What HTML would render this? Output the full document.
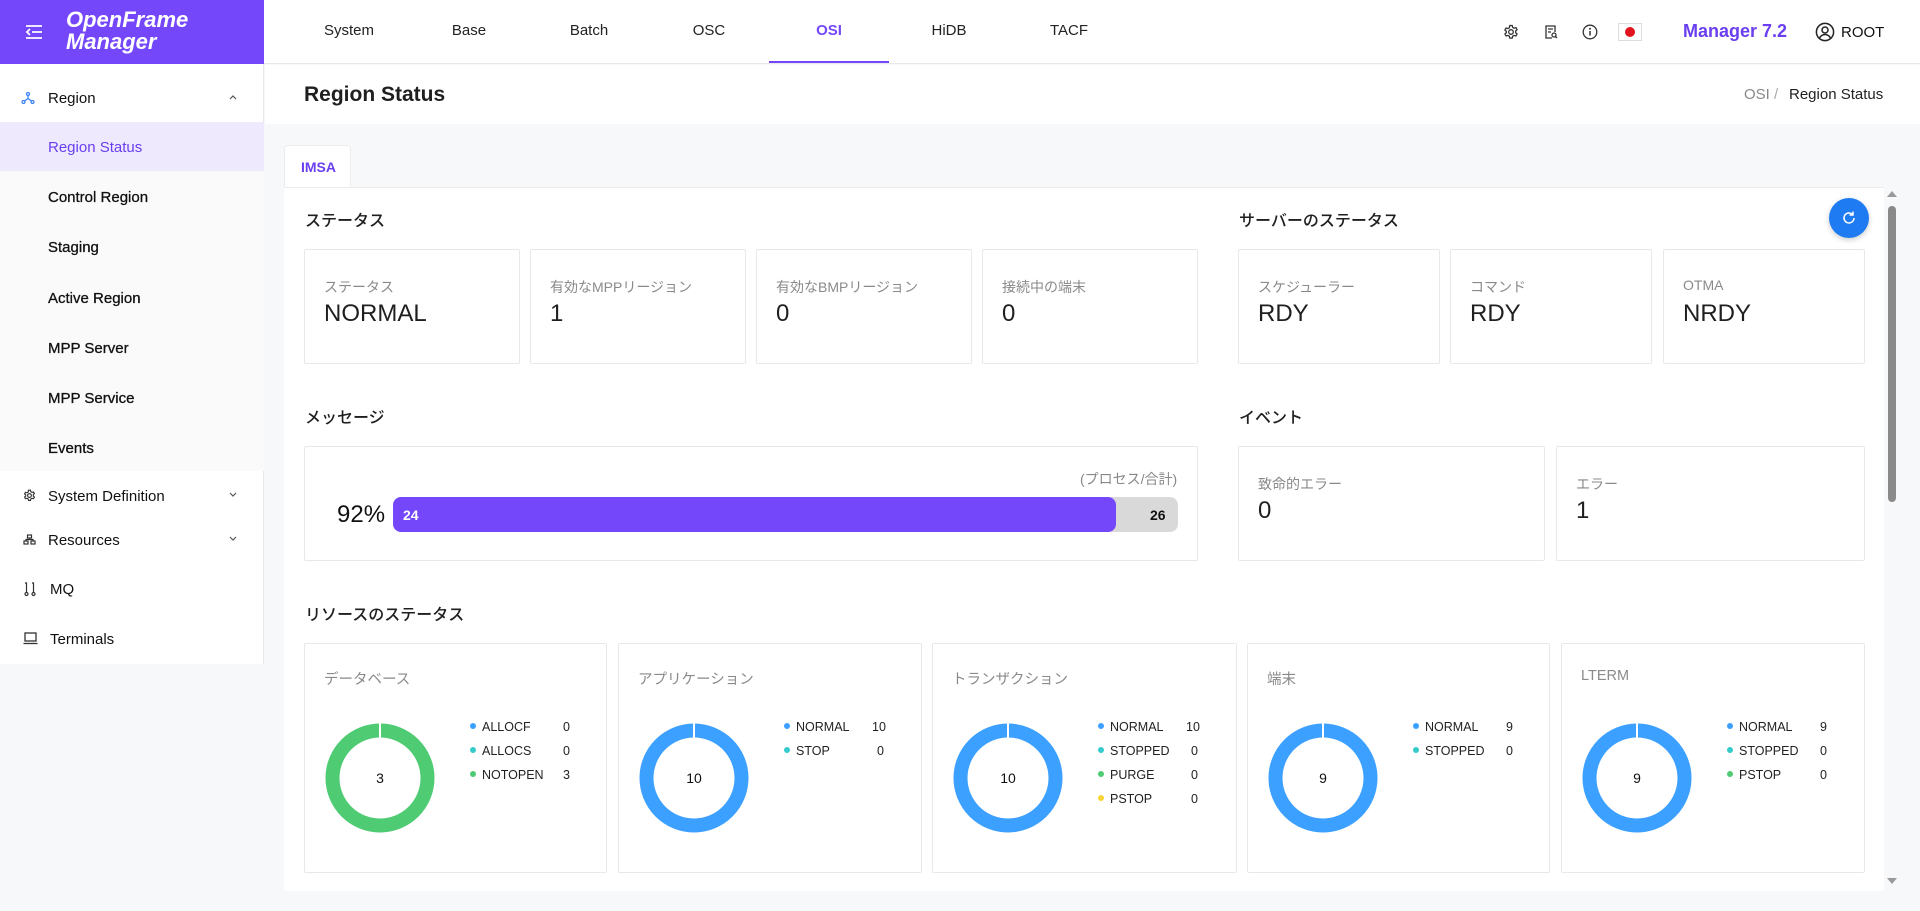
<!DOCTYPE html>
<html><head><meta charset="utf-8"><style>
*{box-sizing:border-box;margin:0;padding:0}
body{width:1920px;height:911px;overflow:hidden;background:#f7f8fa;font-family:"Liberation Sans","Noto Sans CJK JP",sans-serif;color:#1f1f1f;position:relative}
.a{position:absolute}
.t{position:absolute;white-space:nowrap;line-height:1}
.card{position:absolute;background:#fff;border:1px solid #e8e8e8;border-radius:2px}
.lbl{position:absolute;left:19px;top:27px;font-size:14px;color:#8a8a8a;white-space:nowrap}
.val{position:absolute;left:19px;top:50px;font-size:24px;color:#1f1f1f;white-space:nowrap}
.sec{position:absolute;font-size:16px;font-weight:500;color:#1f1f1f;white-space:nowrap}
.nav{position:absolute;top:22px;font-size:15px;color:#222;transform:translateX(-50%)}
.side{position:absolute;left:48px;font-size:15px;color:#111;white-space:nowrap;-webkit-text-stroke:0.3px #111}
.leg{position:absolute;font-size:12.5px;color:#222;white-space:nowrap}
.dot{position:absolute;width:6px;height:6px;border-radius:50%}
</style></head><body>
<!-- header -->
<div class="a" style="left:0;top:0;width:1920px;height:64px;background:#fff;border-bottom:1px solid #e8e8e8"></div>
<div class="a" style="left:0;top:0;width:264px;height:64px;background:#7447fb"></div>
<svg class="a" style="left:25px;top:24px" width="18" height="16" viewBox="0 0 18 16"><g stroke="#fff" stroke-width="1.8" fill="none"><path d="M1 2h16M7 8h10M1 14h16M5 5l-3 3 3 3"/></g></svg>
<div class="t" style="left:66px;top:9px;color:#fff;font-size:22px;font-weight:bold;font-style:italic;line-height:22px">OpenFrame<br>Manager</div>
<div class="nav" style="left:349px">System</div>
<div class="nav" style="left:469px">Base</div>
<div class="nav" style="left:589px">Batch</div>
<div class="nav" style="left:709px">OSC</div>
<div class="nav" style="left:829px;color:#7447fb;font-weight:600">OSI</div>
<div class="nav" style="left:949px">HiDB</div>
<div class="nav" style="left:1069px">TACF</div>
<div class="a" style="left:769px;top:61px;width:120px;height:2px;background:#7447fb"></div>
<svg class="a" style="left:1503px;top:24px" width="16" height="16" viewBox="0 0 16 16"><g fill="none" stroke="#333" stroke-width="1.3"><circle cx="8" cy="8" r="2.3"/><path d="M6.8 1.5h2.4l.4 1.8 1.5.9 1.8-.6 1.2 2-1.4 1.3v1.8l1.4 1.3-1.2 2-1.8-.6-1.5.9-.4 1.8H6.8l-.4-1.8-1.5-.9-1.8.6-1.2-2 1.4-1.3V7.3L1.9 6l1.2-2 1.8.6 1.5-.9z"/></g></svg>
<svg class="a" style="left:1543px;top:24px" width="16" height="16" viewBox="0 0 16 16"><g fill="none" stroke="#333" stroke-width="1.3"><path d="M9 14H3V2h9v6"/><path d="M5 5h5M5 8h3"/><circle cx="11" cy="11" r="2"/><path d="M12.5 12.5l1.5 1.5"/></g></svg>
<svg class="a" style="left:1582px;top:24px" width="16" height="16" viewBox="0 0 16 16"><circle cx="8" cy="8" r="6.8" fill="none" stroke="#333" stroke-width="1.3"/><path d="M8 7v4.5" stroke="#333" stroke-width="1.5"/><circle cx="8" cy="4.8" r="1" fill="#333"/></svg>
<div class="a" style="left:1618px;top:23px;width:24px;height:18px;background:#fff;border:1px solid #ddd"></div>
<div class="a" style="left:1625px;top:27px;width:10px;height:10px;border-radius:50%;background:#e0141e"></div>
<div class="t" style="left:1683px;top:22px;font-size:18px;font-weight:bold;color:#6a3ff0">Manager 7.2</div>
<svg class="a" style="left:1815px;top:22px" width="20" height="20" viewBox="0 0 20 20"><g fill="none" stroke="#222" stroke-width="1.5"><circle cx="10" cy="10" r="8.6"/><circle cx="10" cy="8" r="3"/><path d="M4.5 16c1.5-2.5 3.5-3.5 5.5-3.5s4 1 5.5 3.5"/></g></svg>
<div class="t" style="left:1841px;top:25px;font-size:15px;color:#111">ROOT</div>
<!-- sidebar -->
<div class="a" style="left:0;top:64px;width:264px;height:600px;background:#fff;border-right:1px solid #e8e8e8"></div>
<div class="a" style="left:0;top:171px;width:264px;height:300px;background:#fafafa"></div>
<div class="a" style="left:0;top:122px;width:264px;height:49px;background:#efe9fd"></div>
<svg class="a" style="left:21px;top:91px" width="14" height="14" viewBox="0 0 14 14"><g fill="none" stroke="#3b82f6" stroke-width="1.3"><circle cx="7" cy="3" r="1.5"/><circle cx="2.5" cy="11" r="1.5"/><circle cx="11.5" cy="11" r="1.5"/><path d="M7 4.5v3L3.5 10M7 7.5l3.5 2.5"/></g></svg>
<div class="side" style="top:90px;-webkit-text-stroke:0">Region</div>
<svg class="a" style="left:228px;top:93px" width="10" height="8" viewBox="0 0 10 8"><path d="M2 6l3-3 3 3" fill="none" stroke="#555" stroke-width="1.2"/></svg>
<div class="side" style="top:139px;color:#6a3ff0;-webkit-text-stroke:0">Region Status</div>
<div class="side" style="top:189px">Control Region</div>
<div class="side" style="top:239px">Staging</div>
<div class="side" style="top:290px">Active Region</div>
<div class="side" style="top:340px">MPP Server</div>
<div class="side" style="top:390px">MPP Service</div>
<div class="side" style="top:440px">Events</div>
<svg class="a" style="left:23px;top:489px" width="13" height="13" viewBox="0 0 16 16"><g fill="none" stroke="#333" stroke-width="1.4"><circle cx="8" cy="8" r="2.3"/><path d="M6.8 1.5h2.4l.4 1.8 1.5.9 1.8-.6 1.2 2-1.4 1.3v1.8l1.4 1.3-1.2 2-1.8-.6-1.5.9-.4 1.8H6.8l-.4-1.8-1.5-.9-1.8.6-1.2-2 1.4-1.3V7.3L1.9 6l1.2-2 1.8.6 1.5-.9z"/></g></svg>
<div class="side" style="top:488px;-webkit-text-stroke:0">System Definition</div>
<svg class="a" style="left:228px;top:491px" width="10" height="8" viewBox="0 0 10 8"><path d="M2 2l3 3 3-3" fill="none" stroke="#555" stroke-width="1.2"/></svg>
<svg class="a" style="left:23px;top:534px" width="13" height="11" viewBox="0 0 13 11"><g fill="none" stroke="#333" stroke-width="1.2"><rect x="4.5" y="1" width="4" height="3"/><rect x="1" y="7" width="4" height="3"/><rect x="8" y="7" width="4" height="3"/><path d="M6.5 4v1.5M3 7V5.5h7V7"/></g></svg>
<div class="side" style="top:532px;-webkit-text-stroke:0">Resources</div>
<svg class="a" style="left:228px;top:535px" width="10" height="8" viewBox="0 0 10 8"><path d="M2 2l3 3 3-3" fill="none" stroke="#555" stroke-width="1.2"/></svg>
<svg class="a" style="left:24px;top:581px" width="12" height="16" viewBox="0 0 12 16"><g fill="none" stroke="#333" stroke-width="1.2"><circle cx="2.5" cy="13" r="1.5"/><circle cx="9.5" cy="13" r="1.5"/><path d="M2.5 11.5V2H1M9.5 11.5V2H8"/></g></svg>
<div class="side" style="left:50px;top:581px;-webkit-text-stroke:0">MQ</div>
<svg class="a" style="left:23px;top:632px" width="15" height="13" viewBox="0 0 15 13"><g fill="none" stroke="#333" stroke-width="1.3"><rect x="2" y="1" width="11" height="8"/><path d="M0.5 11.5h14"/></g></svg>
<div class="side" style="left:50px;top:631px;-webkit-text-stroke:0">Terminals</div>
<!-- title bar -->
<div class="a" style="left:265px;top:65px;width:1655px;height:59px;background:#fff"></div>
<div class="t" style="left:304px;top:84px;font-size:21px;font-weight:bold;color:#1f1f1f">Region Status</div>
<div class="t" style="left:1744px;top:87px;font-size:15px;color:#888">OSI</div>
<div class="t" style="left:1774px;top:87px;font-size:15px;color:#aaa">/</div>
<div class="t" style="left:1789px;top:87px;font-size:15px;color:#222">Region Status</div>
<!-- tab -->
<div class="a" style="left:284px;top:145px;width:67px;height:43px;background:#fff;border:1px solid #ececec;border-bottom:none;border-radius:4px 4px 0 0"></div>
<div class="t" style="left:301px;top:160px;font-size:14px;color:#6a3ff0;font-weight:600">IMSA</div>
<div class="a" style="left:284px;top:187px;width:1600px;height:704px;background:#fff;border-top:1px solid #ececec"></div>
<!-- scrollbar -->
<div class="a" style="left:1888px;top:206px;width:8px;height:296px;background:#8a8a8a;border-radius:4px"></div>
<svg class="a" style="left:1886px;top:190px" width="12" height="8"><path d="M1 7l5-6 5 6z" fill="#999"/></svg>
<svg class="a" style="left:1886px;top:877px" width="12" height="8"><path d="M1 1l5 6 5-6z" fill="#999"/></svg>
<!-- refresh -->
<div class="a" style="left:1829px;top:198px;width:40px;height:40px;border-radius:50%;background:#1e7bf2;box-shadow:0 2px 6px rgba(0,0,0,.2)"></div>
<svg class="a" style="left:1841px;top:210px" width="16" height="16" viewBox="0 0 16 16"><path d="M13 8a5 5 0 1 1-1.6-3.7" fill="none" stroke="#fff" stroke-width="1.5"/><path d="M12 1.5v3.5H8.5" fill="none" stroke="#fff" stroke-width="1.5"/></svg>
<!-- status -->
<div class="sec" style="left:305px;top:207px">ステータス</div>
<div class="card" style="left:304px;top:249px;width:216px;height:115px"><div class="lbl">ステータス</div><div class="val">NORMAL</div></div>
<div class="card" style="left:530px;top:249px;width:216px;height:115px"><div class="lbl">有効なMPPリージョン</div><div class="val">1</div></div>
<div class="card" style="left:756px;top:249px;width:216px;height:115px"><div class="lbl">有効なBMPリージョン</div><div class="val">0</div></div>
<div class="card" style="left:982px;top:249px;width:216px;height:115px"><div class="lbl">接続中の端末</div><div class="val">0</div></div>
<div class="sec" style="left:1239px;top:207px">サーバーのステータス</div>
<div class="card" style="left:1238px;top:249px;width:202px;height:115px"><div class="lbl">スケジューラー</div><div class="val">RDY</div></div>
<div class="card" style="left:1450px;top:249px;width:202px;height:115px"><div class="lbl">コマンド</div><div class="val">RDY</div></div>
<div class="card" style="left:1663px;top:249px;width:202px;height:115px"><div class="lbl">OTMA</div><div class="val">NRDY</div></div>
<!-- message -->
<div class="sec" style="left:305px;top:404px">メッセージ</div>
<div class="card" style="left:304px;top:446px;width:894px;height:115px"></div>
<div class="t" style="left:1080px;top:472px;font-size:14px;color:#888">(プロセス/合計)</div>
<div class="t" style="left:337px;top:503px;font-size:24px;color:#111">92%</div>
<div class="a" style="left:393px;top:497px;width:785px;height:35px;background:#d9d9d9;border-radius:8px"></div>
<div class="a" style="left:393px;top:497px;width:723px;height:35px;background:#7447fb;border-radius:8px"></div>
<div class="t" style="left:403px;top:508px;font-size:14px;color:#fff;font-weight:bold">24</div>
<div class="t" style="left:1150px;top:508px;font-size:14px;color:#111;font-weight:bold">26</div>
<!-- events -->
<div class="sec" style="left:1239px;top:404px">イベント</div>
<div class="card" style="left:1238px;top:446px;width:307px;height:115px"><div class="lbl">致命的エラー</div><div class="val" style="top:50px">0</div></div>
<div class="card" style="left:1556px;top:446px;width:309px;height:115px"><div class="lbl">エラー</div><div class="val">1</div></div>
<!-- resources -->
<div class="sec" style="left:305px;top:601px">リソースのステータス</div>

<div class="card" style="left:304px;top:643px;width:303px;height:230px">
<div class="lbl" style="top:24px;font-size:14.5px">データベース</div>
<svg class="a" style="left:19px;top:78px" width="112" height="112"><circle cx="56" cy="56" r="47.5" fill="none" stroke="#4ecb73" stroke-width="14"/><rect x="55" y="1" width="2" height="16" fill="#fff"/><text x="56" y="61" text-anchor="middle" font-size="14" font-family="Liberation Sans,sans-serif" fill="#111">3</text></svg>
<div class="dot" style="left:165px;top:79px;background:#3ba0ff"></div><div class="leg" style="left:177px;top:76px">ALLOCF</div><div class="leg" style="left:258px;top:76px">0</div>
<div class="dot" style="left:165px;top:103px;background:#36cbcb"></div><div class="leg" style="left:177px;top:100px">ALLOCS</div><div class="leg" style="left:258px;top:100px">0</div>
<div class="dot" style="left:165px;top:127px;background:#4ecb73"></div><div class="leg" style="left:177px;top:124px">NOTOPEN</div><div class="leg" style="left:258px;top:124px">3</div>
</div>

<div class="card" style="left:618px;top:643px;width:304px;height:230px">
<div class="lbl" style="top:24px;font-size:14.5px">アプリケーション</div>
<svg class="a" style="left:19px;top:78px" width="112" height="112"><circle cx="56" cy="56" r="47.5" fill="none" stroke="#3ba0ff" stroke-width="14"/><rect x="55" y="1" width="2" height="16" fill="#fff"/><text x="56" y="61" text-anchor="middle" font-size="14" font-family="Liberation Sans,sans-serif" fill="#111">10</text></svg>
<div class="dot" style="left:165px;top:79px;background:#3ba0ff"></div><div class="leg" style="left:177px;top:76px">NORMAL</div><div class="leg" style="left:253px;top:76px">10</div>
<div class="dot" style="left:165px;top:103px;background:#36cbcb"></div><div class="leg" style="left:177px;top:100px">STOP</div><div class="leg" style="left:258px;top:100px">0</div>
</div>

<div class="card" style="left:932px;top:643px;width:305px;height:230px">
<div class="lbl" style="top:24px;font-size:14.5px">トランザクション</div>
<svg class="a" style="left:19px;top:78px" width="112" height="112"><circle cx="56" cy="56" r="47.5" fill="none" stroke="#3ba0ff" stroke-width="14"/><rect x="55" y="1" width="2" height="16" fill="#fff"/><text x="56" y="61" text-anchor="middle" font-size="14" font-family="Liberation Sans,sans-serif" fill="#111">10</text></svg>
<div class="dot" style="left:165px;top:79px;background:#3ba0ff"></div><div class="leg" style="left:177px;top:76px">NORMAL</div><div class="leg" style="left:253px;top:76px">10</div>
<div class="dot" style="left:165px;top:103px;background:#36cbcb"></div><div class="leg" style="left:177px;top:100px">STOPPED</div><div class="leg" style="left:258px;top:100px">0</div>
<div class="dot" style="left:165px;top:127px;background:#4ecb73"></div><div class="leg" style="left:177px;top:124px">PURGE</div><div class="leg" style="left:258px;top:124px">0</div>
<div class="dot" style="left:165px;top:151px;background:#fad337"></div><div class="leg" style="left:177px;top:148px">PSTOP</div><div class="leg" style="left:258px;top:148px">0</div>
</div>

<div class="card" style="left:1247px;top:643px;width:303px;height:230px">
<div class="lbl" style="top:24px;font-size:14.5px">端末</div>
<svg class="a" style="left:19px;top:78px" width="112" height="112"><circle cx="56" cy="56" r="47.5" fill="none" stroke="#3ba0ff" stroke-width="14"/><rect x="55" y="1" width="2" height="16" fill="#fff"/><text x="56" y="61" text-anchor="middle" font-size="14" font-family="Liberation Sans,sans-serif" fill="#111">9</text></svg>
<div class="dot" style="left:165px;top:79px;background:#3ba0ff"></div><div class="leg" style="left:177px;top:76px">NORMAL</div><div class="leg" style="left:258px;top:76px">9</div>
<div class="dot" style="left:165px;top:103px;background:#36cbcb"></div><div class="leg" style="left:177px;top:100px">STOPPED</div><div class="leg" style="left:258px;top:100px">0</div>
</div>

<div class="card" style="left:1561px;top:643px;width:304px;height:230px">
<div class="lbl" style="top:24px;font-size:14.5px">LTERM</div>
<svg class="a" style="left:19px;top:78px" width="112" height="112"><circle cx="56" cy="56" r="47.5" fill="none" stroke="#3ba0ff" stroke-width="14"/><rect x="55" y="1" width="2" height="16" fill="#fff"/><text x="56" y="61" text-anchor="middle" font-size="14" font-family="Liberation Sans,sans-serif" fill="#111">9</text></svg>
<div class="dot" style="left:165px;top:79px;background:#3ba0ff"></div><div class="leg" style="left:177px;top:76px">NORMAL</div><div class="leg" style="left:258px;top:76px">9</div>
<div class="dot" style="left:165px;top:103px;background:#36cbcb"></div><div class="leg" style="left:177px;top:100px">STOPPED</div><div class="leg" style="left:258px;top:100px">0</div>
<div class="dot" style="left:165px;top:127px;background:#4ecb73"></div><div class="leg" style="left:177px;top:124px">PSTOP</div><div class="leg" style="left:258px;top:124px">0</div>
</div>
<div class="a" style="left:284px;top:891px;width:1600px;height:20px;background:#f7f8fa"></div>
</body></html>
